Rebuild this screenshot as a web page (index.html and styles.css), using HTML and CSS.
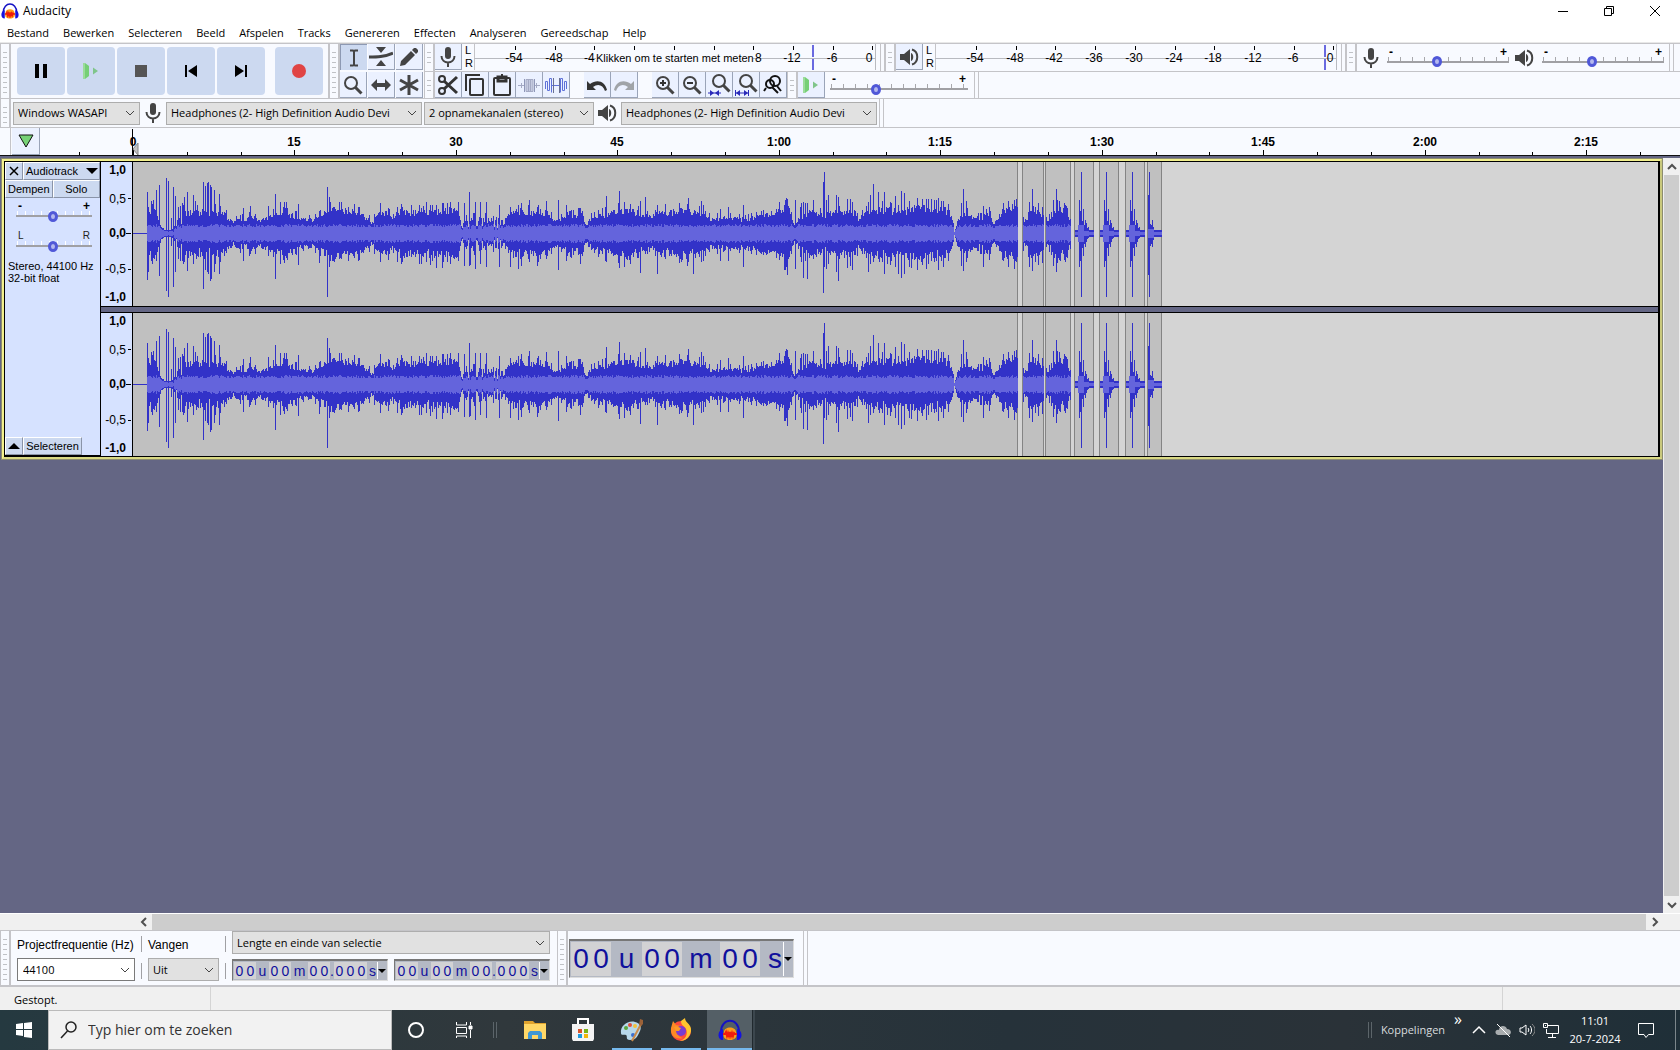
FILE: index.html
```html
<!DOCTYPE html>
<html lang="nl">
<head>
<meta charset="utf-8">
<title>Audacity</title>
<link rel="stylesheet" href="styles.css">
</head>
<body>
<svg class="defs" aria-hidden="true">
  <symbol id="logo" viewBox="0 0 24 24"><path d="M6 14C6 8 18 8 18 14C20 20 16 22 12 22S4 20 6 14Z" fill="#ff9d1a"/><path d="M5 16h2l1-2 1 4 1-3 1 3 1-4 1 4 1-3 1 3 1-3 1 1h2" fill="none" stroke="#f01c0c" stroke-width="2"/><path d="M3 14C3 -1 21 -1 21 14" fill="none" stroke="#1512c4" stroke-width="2"/><path d="M5 11v11C-1 22-1 12 5 11zM19 11v11c6 0 6-10 0-11z" fill="#1512e0"/></symbol>
  <symbol id="mic" viewBox="0 0 20 22"><rect x="7" y="1" width="6" height="12" rx="3"/><path d="M3.500 10c0 8.500 13 8.500 13 0M10 16v5" fill="none" stroke="currentColor" stroke-width="2"/></symbol>
  <symbol id="speaker" viewBox="0 0 20 20"><path d="M1 7h4l6-5v16l-6-5H1z"/><path d="M12 6c3 1 3 7 0 8z"/><path d="M13 2.500c7 2 7 13 0 15" fill="none" stroke="currentColor" stroke-width="2"/></symbol>
  <symbol id="lens" viewBox="0 0 22 22"><circle cx="9" cy="9" r="6" fill="none" stroke="currentColor" stroke-width="2"/><path d="M13.500 13.500l6 6" stroke="currentColor" stroke-width="3"/></symbol>
  <symbol id="playdual" viewBox="0 0 18 18"><path d="M1 1h2l4 3v10l-4 3H1z" fill="#76cf76"/><path d="M2 1v16" stroke="#9bdc9b" stroke-width="2"/><path d="M11 5.500v7l5-3.500z" fill="#7fc58a"/></symbol>
</svg>

<header class="titlebar">
  <svg class="i18"><use href="#logo"/></svg>
  <span class="grow">Audacity</span>
  <div class="winbuttons">
    <button aria-label="Minimaliseren"><svg class="i12" viewBox="0 0 12 12"><path d="M1 6.500h10" stroke="#000"/></svg></button>
    <button aria-label="Verkleinen"><svg class="i12" viewBox="0 0 12 12" fill="none" stroke="#000"><path d="M1.500 3.500h7v7h-7zM3.500 3V1.500h7v7H9"/></svg></button>
    <button aria-label="Sluiten"><svg class="i12" viewBox="0 0 12 12"><path d="M1 1l10 10M11 1L1 11" stroke="#000"/></svg></button>
  </div>
</header>
<nav class="menubar">
  <button>Bestand</button><button>Bewerken</button><button>Selecteren</button><button>Beeld</button><button>Afspelen</button><button>Tracks</button><button>Genereren</button><button>Effecten</button><button>Analyseren</button><button>Gereedschap</button><button>Help</button>
</nav>

<section class="dock">
  <div class="grip"></div>
  <div class="transport">
    <button aria-label="Pauzeren"><svg class="i16" viewBox="0 0 16 16"><path d="M2 1h4v14H2zM10 1h4v14h-4z" fill="#000"/></svg></button>
    <button aria-label="Afspelen"><svg class="i18"><use href="#playdual"/></svg></button>
    <button aria-label="Stoppen"><svg class="i16" viewBox="0 0 16 16"><path d="M2 2h12v12H2z" fill="#555"/></svg></button>
    <button aria-label="Naar begin"><svg class="i16" viewBox="0 0 16 16"><path d="M2 2h2v12H2zM14 2v12L5 8z" fill="#000"/></svg></button>
    <button aria-label="Naar einde"><svg class="i16" viewBox="0 0 16 16"><path d="M12 2h2v12h-2zM2 2v12l9-6z" fill="#000"/></svg></button>
    <button class="record" aria-label="Opnemen"><svg class="i16" viewBox="0 0 16 16"><circle cx="8" cy="8" r="7" fill="#e04444"/></svg></button>
  </div>
  <div class="grip"></div>
  <div class="tools">
    <button class="tb on" aria-label="Selectie"><svg class="i22" viewBox="0 0 22 22"><path d="M7 3.500h3l1 1 1-1h3M7 18.500h3l1-1 1 1h3M11 4v14" fill="none" stroke="#444" stroke-width="2"/></svg></button>
    <button class="tb" aria-label="Envelop"><svg class="i24" viewBox="0 0 24 24"><path d="M7 2h10l-5 6zM7 21h10l-5-6z"/><path d="M0 12c8 0 15 0 24-4" fill="none" stroke="currentColor" stroke-width="3"/></svg></button>
    <button class="tb" aria-label="Tekenen"><svg class="i22" viewBox="0 0 22 22"><path d="M2 20l1-5L13 5l4 4L7 19zM14 4l2-2h2l2 2v2l-2 2z"/></svg></button>
    <button class="tb" aria-label="Zoomen"><svg class="i22"><use href="#lens"/></svg></button>
    <button class="tb" aria-label="Tijdverschuiving"><svg class="i22" viewBox="0 0 22 22"><path d="M1 11l6-6v4h8V5l6 6-6 6v-4H7v4z"/></svg></button>
    <button class="tb" aria-label="Multitool"><svg class="i22" viewBox="0 0 22 22"><path d="M11 1v20M2 6l18 10M2 16L20 6" stroke="currentColor" stroke-width="3"/></svg></button>
  </div>
  <div class="rows">
    <div class="row">
      <div class="grip"></div>
      <button class="tb" aria-label="Opnameniveau"><svg class="i22"><use href="#mic"/></svg></button>
      <div class="lr"><span>L</span><span>R</span></div>
      <div class="meter"><svg data-peak="338" data-hint="1"></svg><span class="meterhint">Klikken om te starten met meten</span></div>
      <div class="end"></div>
      <div class="grip"></div>
      <button class="tb" aria-label="Afspeelniveau"><svg class="i20"><use href="#speaker"/></svg></button>
      <div class="lr"><span>L</span><span>R</span></div>
      <div class="meter"><svg data-peak="389"></svg></div>
      <div class="end"></div>
      <div class="grip"></div>
      <div class="mixer">
        <svg class="i22"><use href="#mic"/></svg>
        <label class="slider mix"><span class="pm"><b>-</b><b>+</b></span><input type="range" min="0" max="100" value="40" aria-label="Opnamevolume"></label>
        <svg class="i20"><use href="#speaker"/></svg>
        <label class="slider mix"><span class="pm"><b>-</b><b>+</b></span><input type="range" min="0" max="100" value="40" aria-label="Afspeelvolume"></label>
      </div>
      <div class="end"></div>
    </div>
    <div class="row">
      <div class="grip"></div>
      <div class="group">
        <button class="tb" aria-label="Knippen"><svg class="i22" viewBox="0 0 22 22" fill="none" stroke="#333" stroke-width="2"><circle cx="5" cy="5" r="3"/><circle cx="5" cy="17" r="3"/><path d="M7 7l13 12M7 15L20 3" stroke-width="3"/></svg></button>
        <button class="tb" aria-label="Kopiëren"><svg class="i22" viewBox="0 0 22 22" fill="none" stroke="#333" stroke-width="2"><rect x="6" y="5" width="13" height="16" rx="1"/><path d="M2 17V1h14"/></svg></button>
        <button class="tb" aria-label="Plakken"><svg class="i22" viewBox="0 0 22 22" fill="none" stroke="#333" stroke-width="2"><rect x="3" y="4" width="16" height="17" rx="1"/><path d="M7 3h8v4H7zM10 1h2" stroke-width="3"/></svg></button>
        <button class="tb" aria-label="Trimmen"><svg class="i22" viewBox="0 0 22 22" stroke="#a4aac4" fill="none"><path d="M0 11.500h6M17 11.500h5M3.500 9v5M18.500 9v5"/><path d="M6.500 5v13" stroke="#8f97b8"/><path d="M16.500 5v13" stroke="#8f97b8"/><path d="M8 5.500h7v12H8z" fill="#c4cae0" stroke-width="1"/><path d="M10.500 5v13M12.500 5v13"/></svg></button>
        <button class="tb" aria-label="Stilte"><svg class="i22" viewBox="0 0 22 22" stroke="#5f72d8" fill="none"><path d="M.5 15V7.500h2v9h2v-12h2v14M6.500 11.500h9M15.500 18.500v-14h2v12h2v-9h2V15" /><path d="M8.500 4v15M14.500 4v15" stroke="#6a7090"/></svg></button>
      </div>
      <div class="group undo">
        <button class="tb" aria-label="Ongedaan maken"><svg class="i22" viewBox="0 0 22 22"><path d="M1 7v9h9l-3-3c5-4 10-2 12 4l2-1C19 7 11 5 4 10z" fill="#333"/></svg></button>
        <button class="tb" aria-label="Opnieuw"><svg class="i22" viewBox="0 0 22 22"><path d="M21 7v9h-9l3-3c-5-4-10-2-12 4l-2-1C3 7 11 5 18 10z" fill="#a0a4a8"/></svg></button>
      </div>
      <div class="group">
        <button class="tb" aria-label="Inzoomen"><svg class="i22" viewBox="0 0 22 22"><use href="#lens" width="22" height="22"/><path d="M6 9h6M9 6v6" stroke="#333" stroke-width="2"/></svg></button>
        <button class="tb" aria-label="Uitzoomen"><svg class="i22" viewBox="0 0 22 22"><use href="#lens" width="22" height="22"/><path d="M6 9h6" stroke="#333" stroke-width="2"/></svg></button>
        <button class="tb" aria-label="Selectie passend"><svg class="i24" viewBox="0 0 24 24"><use href="#lens" x="3" y="-1" width="22" height="22"/><path d="M1 20h13" stroke="#2a2ab8"/><path d="M3 17l4 3-4 3zM12 17l-4 3 4 3z" fill="#2a2ab8"/></svg></button>
        <button class="tb" aria-label="Project passend"><svg class="i24" viewBox="0 0 24 24"><use href="#lens" x="3" y="-1" width="22" height="22"/><path d="M1.500 17v6M14.500 17v6M2 20h12" stroke="#2a2ab8"/><path d="M6 17l-4 3 4 3zM10 17l4 3-4 3z" fill="#2a2ab8"/></svg></button>
        <button class="tb" aria-label="Zoom wisselen"><svg class="i22" viewBox="0 0 22 22" fill="none" stroke="#111" stroke-width="2"><circle cx="13" cy="7" r="5"/><circle cx="8" cy="10" r="4"/><path d="M10 13l6 6M4 14l-2 3M15 12l4 5"/></svg></button>
      </div>
      <div class="grip"></div>
      <button class="tb" aria-label="Afspelen op snelheid"><svg class="i18"><use href="#playdual"/></svg></button>
      <label class="slider speed"><span class="pm"><b>-</b><b>+</b></span><input type="range" min="0" max="100" value="32" aria-label="Afspeelsnelheid"></label>
      <div class="end"></div>
    </div>
  </div>
</section>

<section class="devices">
  <div class="grip"></div>
  <select class="w-host" aria-label="Audiohost"><option>Windows WASAPI</option></select>
  <svg class="i22"><use href="#mic"/></svg>
  <select class="w-dev" aria-label="Opnameapparaat"><option>Headphones (2- High Definition Audio Devi</option></select>
  <select class="w-chan" aria-label="Opnamekanalen"><option>2 opnamekanalen (stereo)</option></select>
  <svg class="i20 spk"><use href="#speaker"/></svg>
  <select class="w-dev" aria-label="Afspeelapparaat"><option>Headphones (2- High Definition Audio Devi</option></select>
  <div class="end"></div>
</section>

<section class="timeline">
  <button class="tb pin" aria-label="Afspeelkop vastzetten"><svg class="i18" viewBox="0 0 18 18"><path d="M2 3h14L9 15z" fill="#76d276" stroke="#111"/></svg></button>
  <svg id="ruler"></svg>
</section>

<main class="workspace">
  <div class="tracks">
    <article class="track">
      <div class="panel">
        <div class="prow"><button class="close" aria-label="Track sluiten"><svg class="i10" viewBox="0 0 10 10"><path d="M1 1l8 8M9 1L1 9" stroke="#000" stroke-width="1.500"/></svg></button><button class="grow name">Audiotrack <svg class="i12" viewBox="0 0 12 12"><path d="M0 3h12L6 9z"/></svg></button></div>
        <div class="prow"><button class="half">Dempen</button><button class="half">Solo</button></div>
        <label class="slider tr"><span class="pm"><b>-</b><b>+</b></span><input type="range" min="0" max="100" value="48" aria-label="Versterking"></label>
        <label class="slider tr"><span class="pm"><i>L</i><i>R</i></span><input type="range" min="0" max="100" value="48" aria-label="Balans"></label>
        <p class="info">Stereo, 44100 Hz<br>32-bit float</p>
        <div class="prow foot"><button class="close" aria-label="Inklappen"><svg class="i12" viewBox="0 0 12 12"><path d="M0 9h12L6 3z"/></svg></button><button class="sel">Selecteren</button></div>
      </div>
      <div class="channels">
        <div class="channel"><svg class="scale"></svg><svg class="wave"></svg></div>
        <div class="channel"><svg class="scale"></svg><svg class="wave"></svg></div>
      </div>
    </article>
  </div>
  <div class="vscroll">
    <button aria-label="Omhoog"><svg class="i10" viewBox="0 0 10 10"><path d="M1 7l4-4 4 4" fill="none" stroke="#505050" stroke-width="2"/></svg></button>
    <div class="thumb"></div>
    <button aria-label="Omlaag"><svg class="i10" viewBox="0 0 10 10"><path d="M1 3l4 4 4-4" fill="none" stroke="#505050" stroke-width="2"/></svg></button>
  </div>
</main>
<div class="hscroll">
  <button aria-label="Links"><svg class="i10" viewBox="0 0 10 10"><path d="M7 1L3 5l4 4" fill="none" stroke="#505050" stroke-width="2"/></svg></button>
  <div class="thumb"></div>
  <button aria-label="Rechts"><svg class="i10" viewBox="0 0 10 10"><path d="M3 1l4 4-4 4" fill="none" stroke="#505050" stroke-width="2"/></svg></button>
</div>

<section class="selbar">
  <div class="grip"></div>
  <div class="field rate"><label for="rate">Projectfrequentie (Hz)</label><select id="rate" class="white"><option>44100</option></select></div>
  <div class="seps"><i></i><i></i></div>
  <div class="field snap"><label for="snap">Vangen</label><select id="snap"><option>Uit</option></select></div>
  <div class="seps"><i></i><i></i></div>
  <div class="field range">
    <select aria-label="Selectieweergave"><option>Lengte en einde van selectie</option></select>
    <div class="times">
      <div class="time"><b>0</b><b>0</b><i class="u">u</i><b>0</b><b>0</b><i class="m">m</i><b>0</b><b>0</b><i class="dot">.</i><b>0</b><b>0</b><b>0</b><i class="s">s</i><button aria-label="Notatie"></button></div>
      <div class="time"><b>0</b><b>0</b><i class="u">u</i><b>0</b><b>0</b><i class="m">m</i><b>0</b><b>0</b><i class="dot">.</i><b>0</b><b>0</b><b>0</b><i class="s">s</i><button aria-label="Notatie"></button></div>
    </div>
  </div>
  <div class="grip"></div>
  <div class="time big"><b>0</b><b>0</b><i class="u">u</i><b>0</b><b>0</b><i class="m">m</i><b>0</b><b>0</b><i class="s">s</i><button aria-label="Notatie"></button></div>
  <div class="end"></div>
</section>
<footer class="status"><span class="msg">Gestopt.</span><span class="grow"></span><span class="tail"></span></footer>

<section class="taskbar">
  <button class="start" aria-label="Start"><svg class="i16" viewBox="0 0 16 16" fill="#fff"><path class="win" d="M0 2l7-1v6H0zM8 1l8-1v7H8zM0 8h7v6l-7-1zM8 8h8v8l-8-1z"/></svg></button>
  <label class="search"><svg class="i18" viewBox="0 0 18 18" fill="none" stroke="#222" stroke-width="1.500"><circle cx="11" cy="6" r="5"/><path d="M7.500 10L1 17"/></svg><input type="text" placeholder="Typ hier om te zoeken" aria-label="Zoeken"></label>
  <button class="app" aria-label="Cortana"><svg class="i18" viewBox="0 0 18 18"><circle cx="9" cy="9" r="7" fill="none" stroke="#fff" stroke-width="2"/></svg></button>
  <button class="app" aria-label="Taakweergave"><svg class="i18" viewBox="0 0 18 18" fill="none" stroke="#fff"><path d="M1.500 1v3h10V1M1.500 6.500h10v6h-10zM1.500 17v-2h10v2M15.500 1v3M15.500 9v8"/><path d="M14 5h3v3h-3z" fill="#fff"/></svg></button>
  <div class="tsep"></div>
  <button class="app ex" aria-label="Verkenner"><svg class="i24" viewBox="0 0 24 24"><path d="M1 3h9l2 2h11v16H1z" fill="#e0a32e"/><path d="M1 6h22v15H1z" fill="#ffd766"/><path d="M5 21v-6l2-2h10l2 2v6h-4v-4H9v4z" fill="#3f97d4"/></svg></button>
  <button class="app" aria-label="Store"><svg class="i24" viewBox="0 0 24 24"><path d="M7 7V1h10v6" fill="none" stroke="#fff" stroke-width="2"/><path d="M1 6h22v15l-1 2H2l-1-2z" fill="#f4f4f4"/><path d="M7 11h4v4H7z" fill="#d8542c"/><path d="M13 11h4v4h-4z" fill="#7cb518"/><path d="M7 16h4v4H7z" fill="#1f9be0"/><path d="M13 16h4v4h-4z" fill="#f5b60c"/></svg></button>
  <button class="app run" aria-label="Paint"><svg class="i24" viewBox="0 0 24 24"><path d="M1 15C0 8 8 2 15 4c5 1 7 5 5 9s-3 9-10 9c-5 0-2-4-4-5S1 18 1 15z" fill="#b7d7ea"/><circle cx="6" cy="10" r="2" fill="#5aa63c"/><circle cx="10" cy="7" r="2" fill="#e04f3c"/><circle cx="15" cy="8" r="2" fill="#f3c13a"/><circle cx="13" cy="17" r="2" fill="#3a6fd0"/><path d="M12 23L21 6" stroke="#c98b4c" stroke-width="2"/><path d="M19 7l1-6 3 1v4l-2 2z" fill="#9c6238"/></svg></button>
  <button class="app run" aria-label="Firefox"><svg class="i24" viewBox="0 0 24 24"><circle cx="12" cy="13" r="10" fill="#ff4a3d"/><path d="M12 3l4-3c0 5 7 6 6 13-1 7-7 10-11 10 6-2 8-7 6-12-1-3-5-3-5-8z" fill="#ffc52e"/><path d="M2 10L4 3l3 4 5 1-3 3c-2 4 0 8 5 9C7 22 1 18 2 10z" fill="#ff8a24"/><circle cx="12" cy="13" r="5" fill="#7a3bd0"/><path d="M5 9c3-1 4 0 7 1l-2 3-3 0z" fill="#ff9a28"/></svg></button>
  <button class="app run active" aria-label="Audacity"><svg class="i24"><use href="#logo"/></svg></button>
  <span class="stack"></span>
  <span class="grow"></span>
  <div class="tsep"></div>
  <span class="links">Koppelingen</span><span class="more">»</span>
  <div class="tray">
    <svg class="i16" viewBox="0 0 16 16" fill="none" stroke="#fff" stroke-width="1.500"><path d="M2 11l6-6 6 6"/></svg>
    <svg class="i16" viewBox="0 0 16 16"><path d="M3 13C-1 12 0 7 4 8c0-5 7-5 8-1 5 0 5 6 1 6z" fill="#a9adaf"/><path d="M2 2l13 13" stroke="#fff"/></svg>
    <svg class="i16" viewBox="0 0 16 16" fill="none" stroke="#fff"><path d="M1 6h2l4-3v10l-4-3H1zM9 6c1 1 1 3 0 4M11 4c2 2 2 6 0 8"/><path d="M13 2c4 4 4 8 0 12" stroke="#888"/></svg>
    <svg class="i16" viewBox="0 0 16 16" fill="none" stroke="#fff"><path d="M5 3.500h10.500v8H3.500V7M9.500 12v3M5 15.500h8M.5 1.500h4v4h-4zM2 3.500h1"/></svg>
  </div>
  <div class="clock"><span>11:01</span><span>20-7-2024</span></div>
  <button class="notify" aria-label="Meldingen"><svg class="i18" viewBox="0 0 18 18" fill="none" stroke="#fff"><path d="M1.500 2.500h15v11h-5L9 16.500l-2-3H1.500z"/></svg></button>
  <span class="desk"></span>
</section>
<script src="app.js"></script>
</body>
</html>
```
FILE: styles.css
```css
* { box-sizing: border-box; }
body {
  margin: 0;
  height: 100vh;
  display: flex;
  flex-direction: column;
  overflow: hidden;
  background: #f8faff;
  color: #000;
  font: 11px/16px "Open Sans", "Noto Sans", sans-serif;
}
button { border: 0; padding: 0; margin: 0; background: none; font: inherit; color: inherit; }
svg { flex: none; display: block; fill: currentColor; }
svg[fill="none"] { fill: none; }
.defs { position: absolute; width: 0; height: 0; }
.i10 { width: 10px; height: 10px; }
.i12 { width: 12px; height: 12px; }
.i16 { width: 16px; height: 16px; }
.i18 { width: 18px; height: 18px; }
.i20 { width: 20px; height: 20px; }
.i22 { width: 22px; height: 22px; }
.i24 { width: 24px; height: 24px; }
.grow { flex: 1; }

.titlebar { display: flex; align-items: center; gap: 4px; height: 22px; padding-left: 1px; background: #fff; font-size: 12px; }
.winbuttons { display: flex; padding-right: 2px; }
.winbuttons button { width: 46px; height: 20px; display: grid; place-items: center; }
.menubar { display: flex; gap: 14px; height: 21px; padding: 1px 0 0 7px; background: #fff; border-bottom: 1px solid #e8e8e8; }

.grip {
  flex: none;
  width: 11px;
  border: 1px solid #c4c4c8;
  border-width: 0 2px 0 1px;
  background: repeating-linear-gradient(#f8faff 0 4px, #c0c2c6 4px 5px) content-box;
  padding: 4px 2px;
}
.end { flex: none; width: 5px; border: 1px solid #c4c4c8; border-width: 0 1px; }

.dock { display: flex; height: 56px; border: 1px solid #c4c4c8; border-width: 1px 0; color: #444; }
.transport { flex: none; display: flex; gap: 2px; padding: 3px 5px 3px 6px; border-right: 1px solid #c4c4c8; width: 318px; }
.transport button { width: 48px; height: 48px; border-radius: 4px; background: #ccd9f0; display: grid; place-items: center; }
.transport .record { margin-left: 8px; }
.tools { display: grid; grid-template-columns: repeat(3, 28px); grid-template-rows: 28px 26px; }
.tb { flex: none; width: 27px; height: 26px; display: grid; place-items: center; background: #ebf1ff; border-right: 1px solid #9aa4b8; border-bottom: 1px solid #9aa4b8; color: #444; }
.tb.on { background: #ccd9f0; border: 1px solid #8d99b3; border-width: 1px 0 0 1px; }
.rows { flex: 1; min-width: 0; }
.row { display: flex; height: 27px; }
.row + .row { border-top: 1px solid #c4c4c8; height: 28px; }
.group { display: flex; }
.undo { padding: 0 14px; }
.lr { width: 12px; padding-left: 3px; display: flex; flex-direction: column; font: 11px/13px "Liberation Sans", Arial, sans-serif; color: #000; }
.meter { position: relative; flex: none; width: 406px; }
.meter svg { width: 406px; height: 26px; font: 12px "Liberation Sans", Arial, sans-serif; }
.meterhint { position: absolute; left: 122px; top: 6px; width: 157px; background: #f8faff; text-align: center; white-space: nowrap; color: #000; font: 11px/16px "Liberation Sans", Arial, sans-serif; }
.mixer { display: flex; align-items: center; gap: 5px; padding: 0 5px 0 3px; }

.slider { display: flex; flex-direction: column; background: repeating-linear-gradient(90deg, #a8a8ac 0 1px, transparent 1px 12px) left 1px bottom 7px / 100% 4px no-repeat; }
.slider .pm { display: flex; justify-content: space-between; height: 8px; padding: 0 2px; }
.slider .pm b { color: #000; font: bold 12px/8px "Liberation Sans", Arial, sans-serif; }
.slider .pm i { color: #222; font: normal 10px/8px "Liberation Sans", Arial, sans-serif; }
.slider input { appearance: none; width: 100%; height: 12px; margin: 0; background: linear-gradient(#a0a0a4, #a0a0a4) 0 center / 100% 2px no-repeat; }
.slider input::-webkit-slider-thumb { appearance: none; width: 10px; height: 11px; border-radius: 50%; background: #b4b8ee; border: 3px solid #5058d8; }
.mix { width: 122px; }
.mixer .mix + svg { margin-right: 3px; }
.speed { width: 138px; margin: 3px 6px 4px 5px; }

.devices { display: flex; align-items: center; gap: 2px; height: 29px; border-bottom: 1px solid #c4c4c8; color: #444; }
.devices .grip, .devices .end { align-self: stretch; }
.devices .spk { margin: 0 2px 0 1px; }
select {
  appearance: none;
  height: 23px;
  margin: 0;
  padding: 0 20px 0 4px;
  border: 1px solid #adadad;
  border-radius: 0;
  color: #000;
  font: inherit;
  text-overflow: clip;
  background: #e1e1e1 url("data:image/svg+xml,%3Csvg xmlns='http://www.w3.org/2000/svg' width='10' height='6'%3E%3Cpath d='M1 1l4 4 4-4' fill='none' stroke='%23444'/%3E%3C/svg%3E") right 4px center no-repeat;
}
select.white { background-color: #fff; border-color: #7a7a7a; padding-left: 5px; }
.devices select { font-size: 12px; font-family: "Open Sans", "Noto Sans", sans-serif; }
.devices select { font-size: 11px; }
.w-host { width: 127px; }
.w-dev { width: 256px; }
.w-chan { width: 170px; }

.timeline { display: flex; height: 28px; padding-left: 12px; border-bottom: 1px solid #111; background: linear-gradient(#c4c4c8, #c4c4c8) 10px 0 / 1px 100% no-repeat #f8faff; }
.timeline .pin { width: 28px; height: 27px; }
#ruler { flex: 1; min-width: 0; height: 27px; margin-left: -40px; font: bold 12px "Liberation Sans", Arial, sans-serif; pointer-events: none; }

.workspace { flex: 1; min-height: 0; display: flex; border-top: 2px solid #646684; background: #646684; }
.tracks { flex: 1; min-width: 0; padding-left: 1px; }
.track { display: flex; height: 302px; border: 3px solid #f2f08c; border-right-color: #c8c87c; border-bottom-color: #d8d884; outline: 1px solid #8c8c70; outline-offset: -1px; }
.panel { flex: none; width: 97px; display: flex; flex-direction: column; border: 1px solid #000; background: #d6e2ff; font: 11px/12px "Liberation Sans", Arial, sans-serif; border-width: 1px 1px 2px 1px; }
.prow { display: flex; }
.prow button { height: 18px; display: flex; align-items: center; justify-content: center; border: 1px solid #fff; border-right-color: #8a94a8; border-bottom-color: #8a94a8; background: #ccd9f0; }
.prow .close { width: 18px; }
.prow .name { justify-content: space-between; padding: 0 1px 0 2px; }
.prow .half { flex: 1; }
.prow .sel { width: 59px; }
.tr { width: 76px; margin: 4px 0 0 11px; background: repeating-linear-gradient(90deg, #fff 0 1px, transparent 1px 8px) left 1px bottom 7px / 100% 4px no-repeat; }
.tr + .tr { margin-top: 10px; }
.info { margin: 8px 0 0 3px; }
.foot { margin-top: auto; }
.channels { flex: 1; min-width: 0; display: flex; flex-direction: column; gap: 5px; background: #646684; border-right: 2px solid #000; }
.channel { flex: 1; min-height: 0; display: flex; border: 1px solid #000; border-width: 1px 0; background: #d4d4d4; }
.scale { width: 32px; height: 100%; background: #d6e2ff; font: 12px "Liberation Sans", Arial, sans-serif; border-right: 1px solid #000; }
.wave { flex: 1; min-width: 0; height: 100%; }

.vscroll { width: 17px; display: flex; flex-direction: column; background: #f0f0f0; }
.vscroll button, .hscroll button { flex: none; width: 17px; height: 17px; display: grid; place-items: center; }
.thumb { flex: 1; background: #cdcdcd; }
.vscroll .thumb { margin: 0 1px; }
.hscroll { display: flex; height: 17px; padding: 0 17px 0 135px; background: #f0f0f0; border-top: 1px solid #fff; }
.hscroll button { height: 16px; }

.selbar { display: flex; height: 57px; border: 1px solid #c4c4c8; border-width: 1px 0 2px; }
.field { display: flex; flex-direction: column; justify-content: space-between; padding: 5px 0 4px; }
.field label { font: 12px/18px "Liberation Sans", Arial, sans-serif; }
.rate { width: 118px; margin-left: 6px; }
.snap { width: 71px; }
.seps { width: 13px; display: flex; flex-direction: column; justify-content: space-between; align-items: center; padding: 5px 0 6px; }
.seps i { width: 1px; height: 16px; background: #a0a0a4; }
.range { width: 318px; margin-right: 7px; padding-top: 0; }
.times { display: flex; justify-content: space-between; }
.time { display: flex; height: 22px; width: 156px; padding: 1px; border: 1px solid #777; border-right-color: #ddd; border-bottom-color: #ddd; border-top-width: 2px; background: #b4b9c4; color: #10109c; font: 14px/19px "Liberation Sans", Arial, sans-serif; }
.time b, .time i { flex: none; width: 11px; text-align: center; font-weight: normal; font-style: normal; }
.time b { background: #d2d2d4; }
.time .u { width: 13px; }
.time .m { width: 17px; }
.time .dot { width: 4px; }
.time .s { flex: 1; text-align: right; padding-right: 1px; }
.time button { width: 9px; border-left: 1px solid #fff; display: grid; place-items: center; }
.time button::before { content: ""; border: 4px solid transparent; border-top-color: #000; border-bottom: 0; }
.big { align-self: center; width: 225px; height: 39px; margin: 0 9px 0 1px; font: 28px/34px "Liberation Sans", Arial, sans-serif; }
.big b { width: 20px; }
.big .u { width: 31px; }
.big .m { width: 38px; }

.status { display: flex; height: 23px; background: #f0f0f0; line-height: 25px; }
.status .msg { width: 211px; padding-left: 14px; border-right: 1px solid #d4d4d4; }
.status .tail { width: 178px; border-left: 1px solid #d4d4d4; }

.taskbar { display: flex; align-items: center; height: 40px; background: linear-gradient(90deg, #253940, #30383c 30%, #26323a 60%, #2a3238 80%, #1f2f38); color: #fff; }
.start { width: 48px; height: 40px; display: grid; place-items: center; }
.search { display: flex; align-items: center; width: 344px; height: 40px; padding: 0 11px; gap: 10px; background: #f2f2f2; border: 1px solid #bbb; }
.search input { flex: 1; min-width: 0; border: 0; padding: 0; background: none; font: 14px/20px "Open Sans", "Noto Sans", sans-serif; }
.search input::placeholder { color: #333; opacity: 1; }
.app { width: 48px; height: 40px; display: grid; place-items: center; }
.tsep { width: 4px; height: 16px; margin: 0 5px; border: 1px solid #5c656a; border-width: 0 1px; }
.ex { margin-left: 9px; }
.run { width: 49px; background: linear-gradient(#76b9ed, #76b9ed) center bottom / 40px 2px no-repeat; }
.active { width: 45px; margin-left: 2px; background: linear-gradient(#76b9ed, #76b9ed) center bottom / 45px 2px no-repeat #545f66; }
.stack { width: 3px; height: 40px; background: #3c474e; border-left: 1px solid #20292e; }
.links { color: #d8dcde; margin-left: 4px; }
.more { align-self: flex-start; margin: 0 9px; font-size: 16px; line-height: 18px; }
.tray { display: flex; gap: 8px; }
.clock { width: 72px; display: flex; flex-direction: column; align-items: center; line-height: 18px; }
.notify { width: 30px; display: grid; place-items: center; margin-right: 14px; }
.desk { width: 5px; height: 40px; border-left: 1px solid #7c868b; }
```
FILE: app.js
```js
const ns = 'http://www.w3.org/2000/svg';
function add(parent, tag, attrs, text) {
  const el = document.createElementNS(ns, tag);
  for (const k in attrs) el.setAttribute(k, attrs[k]);
  if (text !== undefined) el.textContent = text;
  parent.appendChild(el);
  return el;
}
function rect(p, x, y, w, h, fill) { add(p, 'rect', { x, y, width: w, height: h, fill }); }

// Level meters; the hint box covers the middle of the recording scale
document.querySelectorAll('.meter svg').forEach(svg => {
  rect(svg, 0, 0, 1, 26, '#c4c4c8');
  rect(svg, 0, 14, 401, 1, '#b8bac0');
  rect(svg, 401, 0, 1, 26, '#b8bac0');
  for (let i = 0; i < 10; i++) {
    const x = 41 + Math.round(i * 39.7);
    rect(svg, x, 2, 1, 4, '#000');
    if (svg.dataset.hint && i >= 2 && i <= 6) continue;
    add(svg, 'text', { x: i === 9 ? x - 3 : x - 1, y: 18, 'text-anchor': 'middle', fill: '#000' }, String(i * 6 - 54));
  }
  if (svg.dataset.hint) {
    add(svg, 'text', { x: 110, y: 18, fill: '#000' }, '-4');
    add(svg, 'text', { x: 281, y: 18, fill: '#000' }, '8');
  }
  rect(svg, +svg.dataset.peak, 1, 2, 12, '#6a6ae0');
  rect(svg, +svg.dataset.peak, 15, 2, 11, '#6a6ae0');
});

// Time ruler
const ruler = document.getElementById('ruler');
for (let i = -1; i < 29; i++) {
  const x = 133 + Math.round(i * 53.82);
  const major = i % 3 === 0;
  rect(ruler, x, major ? 22 : 24, 1, major ? 5 : 3, '#000');
  if (major) {
    const s = i * 5;
    const label = s < 60 ? String(s) : Math.floor(s / 60) + ':' + String(s % 60).padStart(2, '0');
    add(ruler, 'text', { x, y: 18, 'text-anchor': 'middle' }, label);
  }
}
rect(ruler, 132, 1, 1, 26, '#000');
add(ruler, 'path', { d: 'M133 21l5-6v12z', fill: '#c4c4c4', stroke: '#888' });

// Amplitude scale
document.querySelectorAll('.scale').forEach(svg => {
  [['1,0', 12, 1], ['0,5', 41, 0], ['0,0', 75, 1], ['-0,5', 111, 0], ['-1,0', 139, 1]].forEach(([t, y, bold]) => {
    add(svg, 'text', { x: 25, y, 'text-anchor': 'end', 'font-weight': bold ? 'bold' : 'normal' }, t);
  });
  rect(svg, 27, 36, 3, 1, '#000');
  rect(svg, 25, 71, 5, 1, '#000');
  rect(svg, 27, 107, 3, 1, '#000');
});

// Peak envelope as [x, height] pairs
const env = [[147,22],[155,22],[158,14],[160,8],[164,3],[173,3],[177,19],[185,21],[215,22],[225,19],[232,12],[245,15],[255,18],[260,12],[270,18],[280,20],[290,19],[300,15],[312,13],[322,19],[329,24],[345,24],[355,22],[366,16],[372,11],[376,18],[385,21],[392,17],[400,22],[425,21],[440,23],[458,24],[462,12],[468,14],[476,15],[486,15],[495,12],[503,9],[507,20],[515,24],[530,21],[548,22],[553,12],[565,16],[582,20],[586,8],[590,15],[605,20],[615,23],[630,24],[640,20],[650,16],[656,22],[670,22],[680,23],[700,21],[708,15],[725,16],[745,14],[765,18],[778,23],[786,28],[791,20],[794,8],[800,19],[807,24],[820,19],[835,21],[850,21],[858,15],[868,22],[885,25],[900,21],[915,27],[930,26],[945,24],[951,20],[954,1],[957,12],[963,20],[972,18],[980,15],[989,20],[993,7],[997,15],[1001,23],[1017,26]];
const clipEnv = [[1023,12],[1028,16],[1032,26],[1038,23],[1042,20],[1043,14]];
const clipEnv2 = [[1046,12],[1051,16],[1056,26],[1063,24],[1068,18],[1070,14]];
const spikes = [[147,41,46],[148,26,38],[151,32,27],[153,33,24],[156,43,27],[159,48,42],[166,55,57],[168,52,63],[171,15,12],[173,46,53],[175,37,38],[182,30,27],[184,36,28],[187,41,37],[193,38,30],[195,32,20],[203,51,55],[205,47,36],[207,50,38],[208,51,40],[210,48,47],[211,46,45],[214,43,38],[219,39,40],[243,25,27],[250,27,20],[268,27,22],[275,39,45],[280,31,30],[284,31,29],[286,31,24],[298,29,31],[319,22,29],[327,46,63],[329,36,33],[380,30,28],[402,26,28],[421,25,30],[426,31,28],[432,28,27],[436,28,34],[442,30,34],[464,30,32],[469,41,32],[470,12,31],[475,31,35],[480,31,30],[486,31,33],[499,28,33],[510,26,33],[518,28,35],[529,33,28],[537,26,32],[546,32,25],[558,33,36],[566,28,27],[580,25,30],[606,37,28],[619,42,34],[630,29,30],[640,32,39],[645,36,20],[657,28,40],[665,29,25],[681,25,28],[688,35,28],[693,20,40],[701,32,28],[703,28,27],[720,24,27],[728,26,27],[743,28,33],[784,28,36],[785,33,36],[786,35,33],[787,34,41],[795,33,35],[801,30,28],[803,31,44],[807,30,45],[813,33,25],[823,51,59],[824,61,33],[826,33,35],[828,38,30],[836,38,38],[838,36,47],[847,34,34],[850,34,32],[852,31,36],[868,31,38],[870,38,30],[873,49,28],[878,41,25],[884,41,40],[887,25,30],[895,37,33],[898,28,40],[901,42,44],[904,40,40],[911,25,34],[938,35,36],[961,30,32],[963,44,37],[966,32,28],[983,27,33],[1012,29,22],[1029,31,33],[1032,44,37],[1053,33,32],[1056,44,38],[1059,32,26]];
const clips = [[132,1017],[1022,1043],[1045,1070],[1074,1093],[1099,1118],[1125,1144],[1147,1161]];
// Stretches where the signal breaks up into separate bursts
const bursts = [[173,186],[460,502],[796,806]];

let seed = 7;
const rnd = () => (seed = (seed * 16807) % 2147483647) / 2147483647;
function at(list, x) {
  for (let i = 1; i < list.length; i++) {
    if (x <= list[i][0]) {
      const [a, p] = list[i - 1], [b, q] = list[i];
      return p + (q - p) * (x - a) / (b - a);
    }
  }
  return list[list.length - 1][1];
}
const cols = {};
function fillCols(list) {
  for (let x = list[0][0]; x <= list[list.length - 1][0]; x++) {
    const h = at(list, x);
    const wild = bursts.some(([a, b]) => x >= a && x <= b);
    const r = rnd();
    let k = r > 0.85 ? 1.3 : 0.78 + rnd() * 0.32;
    if (wild) k = r > 0.75 ? 1.35 : r < 0.2 ? 0.45 : 0.65 + rnd() * 0.45;
    cols[x] = [h * k, h * k * (0.8 + rnd() * 0.3), Math.min(h * k * 0.6, 6 + rnd() * 3)];
  }
}
[env, clipEnv, clipEnv2].forEach(fillCols);
spikes.forEach(([x, u, d]) => { cols[x] = [u, d, cols[x] ? cols[x][2] : 3]; });
[[1075, 1093], [1100, 1118], [1126, 1144]].forEach(([s, e]) => {
  for (let x = s; x <= e; x++) cols[x] = [3, 3, 1];
  [[3,5,4],[4,33,33],[5,22,27],[6,61,63],[7,12,14],[8,24,22],[9,8,10],[10,13,13],[11,10,8],[12,5,5],[13,6,4]].forEach(([o, u, d]) => { cols[s + o] = [u, d, o < 9 ? 8 : 2]; });
});
for (let x = 1148; x <= 1161; x++) cols[x] = [3, 3, 1];
[[1148,38,41],[1149,61,63],[1150,9,12],[1151,8,10],[1152,13,13],[1153,6,6]].forEach(([x, u, d]) => { cols[x] = [u, d, 4]; });

document.querySelectorAll('.wave').forEach(svg => {
  const left = 133, mid = 71;
  clips.forEach(([a, b]) => {
    rect(svg, a - left, 0, b - a, 160, '#c0c0c0');
    if (a > left) rect(svg, a - left, 0, 1, 160, '#848484');
    rect(svg, b - left, 0, 1, 160, '#848484');
  });
  let peak = '', rms = '';
  for (const key in cols) {
    const x = key - left;
    const [u, d, r] = cols[key].map(Math.round);
    peak += `M${x} ${mid - u}h1v${u + d + 1}h-1z`;
    rms += `M${x} ${mid - r}h1v${r * 2 + 1}h-1z`;
  }
  rect(svg, 0, mid, 14, 1, '#3232c8');
  add(svg, 'path', { d: peak, fill: '#3232c8' });
  add(svg, 'path', { d: rms, fill: '#6464dc' });
});
```
